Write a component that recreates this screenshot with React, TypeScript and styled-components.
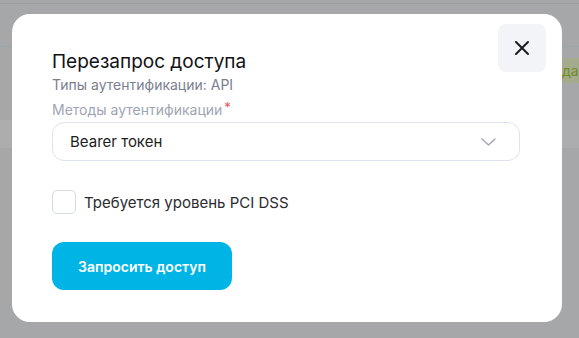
import React from "react";
import styled, { createGlobalStyle } from "styled-components";

const GlobalStyle = createGlobalStyle`
  html, body { margin: 0; padding: 0; }
  body {
    background: #a6a7a9;
    font-family: Inter, "Noto Sans", Roboto, sans-serif;
    -webkit-font-smoothing: antialiased;
  }
`;

const Page = styled.div`
  position: relative;
  width: 579px;
  height: 338px;
  overflow: hidden;
  background: #a6a7a9;
  display: flex;
  flex-direction: column;
`;

const TopStrip = styled.div`
  height: 3px;
  border-bottom: 1px solid #9b9ca2;
`;

const HeaderArea = styled.div`
  height: 42px;
  border-bottom: 1px solid #9ea4ac;
`;

const StatusRow = styled.div`
  height: 73px;
  display: flex;
  justify-content: flex-end;
  align-items: flex-start;
  padding-top: 11px;
  box-sizing: border-box;
`;

const Badge = styled.div`
  height: 25px;
  width: 30px;
  margin-right: -13px;
  background: #a4aa8c;
  color: #6f8d26;
  font-size: 14px;
  line-height: 25px;
  padding-left: 3px;
  white-space: nowrap;
  overflow: hidden;
`;

const Band = styled.div`
  height: 28px;
  background: #acadae;
`;

const Modal = styled.div`
  position: absolute;
  left: 12px;
  top: 14px;
  width: 550px;
  height: 308px;
  box-sizing: border-box;
  background: #ffffff;
  border-radius: 18px;
  padding: 36px 42px 32px 40px;
  display: flex;
  flex-direction: column;
`;

const CloseButton = styled.button`
  position: absolute;
  top: 10px;
  right: 16px;
  width: 48px;
  height: 48px;
  border: none;
  border-radius: 8px;
  background: #f3f4f8;
  display: flex;
  align-items: center;
  justify-content: center;
  padding: 0;
  cursor: pointer;
`;

const Title = styled.h2`
  margin: 0;
  font-size: 19px;
  line-height: 24px;
  font-weight: 400;
  color: #111114;
`;

const Caption = styled.div<{ $tone: "dark" | "light" }>`
  font-size: 14px;
  line-height: 22px;
  color: ${(p) => (p.$tone === "dark" ? "#7b7e8e" : "#a0a4b4")};
`;

const Required = styled.span`
  color: #f0505a;
  margin-left: 2px;
  vertical-align: 3px;
  font-size: 13px;
`;

const Select = styled.div`
  margin-top: 1px;
  height: 39px;
  box-sizing: border-box;
  border: 1px solid #dfe3ed;
  border-radius: 12px;
  display: flex;
  align-items: center;
  justify-content: space-between;
  padding: 0 23px 0 17px;
  font-size: 15px;
  color: #1d1d22;
`;

const CheckRow = styled.label`
  margin-top: 29px;
  display: flex;
  align-items: center;
  gap: 8px;
  font-size: 15px;
  color: #2b2b30;
`;

const CheckBox = styled.span`
  width: 24px;
  height: 24px;
  box-sizing: border-box;
  border: 1px solid #d5dae6;
  border-radius: 5px;
  background: #fff;
`;

const PrimaryButton = styled.button`
  margin-top: 28px;
  width: 180px;
  height: 48px;
  border: none;
  border-radius: 12px;
  background: #00b5e6;
  color: #ffffff;
  font-family: inherit;
  font-size: 14px;
  font-weight: 600;
  cursor: pointer;
`;

export default function App() {
  return (
    <>
      <GlobalStyle />
      <Page>
        <TopStrip />
        <HeaderArea />
        <StatusRow>
          <Badge>дан</Badge>
        </StatusRow>
        <Band />
        <Modal>
          <CloseButton aria-label="Закрыть">
            <svg width="16" height="16" viewBox="0 0 16 16" fill="none">
              <path d="M2 2L14 14M14 2L2 14" stroke="#1c1c20" strokeWidth="2" strokeLinecap="round" />
            </svg>
          </CloseButton>
          <Title>Перезапрос доступа</Title>
          <Caption $tone="dark">Типы аутентификации: API</Caption>
          <Caption $tone="light">
            Методы аутентификации<Required>*</Required>
          </Caption>
          <Select>
            <span>Bearer токен</span>
            <svg width="15" height="8" viewBox="0 0 15 8" fill="none">
              <path d="M1 1L7.5 7L14 1" stroke="#a6abb9" strokeWidth="1.6" strokeLinecap="round" strokeLinejoin="round" />
            </svg>
          </Select>
          <CheckRow>
            <CheckBox />
            Требуется уровень PCI DSS
          </CheckRow>
          <PrimaryButton>Запросить доступ</PrimaryButton>
        </Modal>
      </Page>
    </>
  );
}
